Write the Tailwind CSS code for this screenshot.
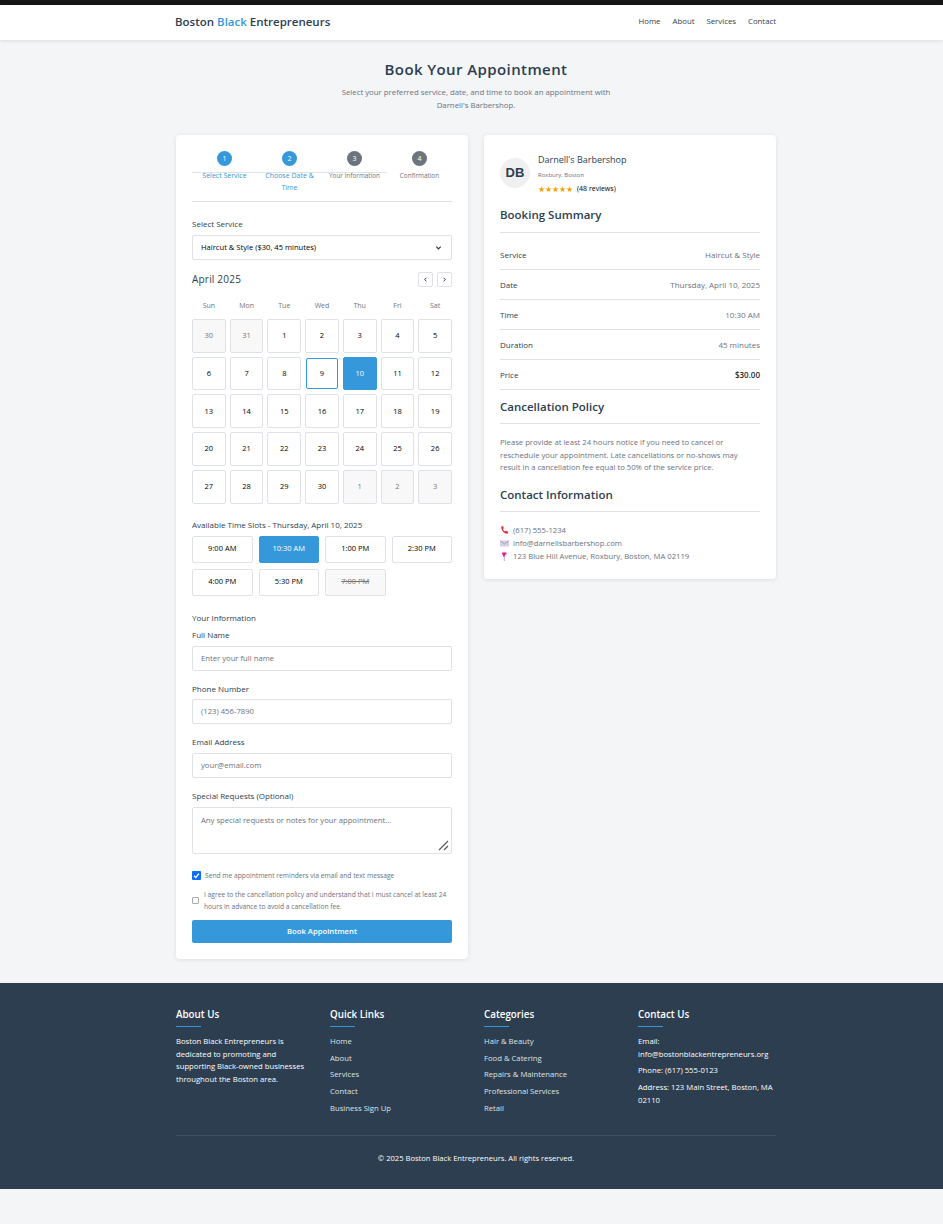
<!DOCTYPE html>
<html lang="en">
<head>
  <meta charset="UTF-8" />
  <title>Book Your Appointment</title>
  <script src="https://cdn.jsdelivr.net/npm/@tailwindcss/browser@4"></script>
</head>
<body class="bg-[#f4f5f7] text-[#2c3e50] font-['Open_Sans',sans-serif] text-[7.7px] min-h-[1224px]">
  <div class="h-[5px] bg-[#151515]"></div>

  <!-- Header -->
  <header class="h-[35px] bg-white shadow-[0_1px_4px_rgba(0,0,0,0.1)]">
    <div class="w-[600px] ml-[175px] pl-0 pb-[1px] h-full flex items-center justify-between">
      <div class="text-[11.5px] font-semibold">Boston <span class="text-[#3498db]">Black</span> Entrepreneurs</div>
      <nav class="flex gap-3 text-[7.8px] font-medium mr-[-1px]">
        <span>Home</span><span>About</span><span>Services</span><span>Contact</span>
      </nav>
    </div>
  </header>

  <main class="w-[600px] ml-[176px]">
    <div class="pt-[19px] text-center">
      <h1 class="text-[15px] leading-[20px] font-semibold tracking-[0.4px]">Book Your Appointment</h1>
      <p class="mt-[7px] text-[7.8px] leading-[13px] text-[#6b7280]">Select your preferred service, date, and time to book an appointment with<br>Darnell's Barbershop.</p>
    </div>

    <div class="mt-[23px] flex items-start gap-4">
      <!-- Booking form -->
      <section class="w-[292px] h-[824px] bg-white rounded-[4px] shadow-[0_1px_5px_rgba(0,0,0,0.09)] p-4">
        <div class="relative h-[51px] border-b border-[#dee2e6] grid grid-cols-4 text-center text-[7px] leading-[12px]">
          <div class="absolute left-0 top-[21px] w-[195px] h-px bg-[#dee2e6]"></div>
          <div class="text-[#3498db]">
            <div class="relative mx-auto w-[15px] h-[15px] rounded-full bg-[#3498db] text-white flex items-center justify-center">1</div>
            <div class="relative mt-[4px]">Select Service</div>
          </div>
          <div class="text-[#3498db]">
            <div class="relative mx-auto w-[15px] h-[15px] rounded-full bg-[#3498db] text-white flex items-center justify-center">2</div>
            <div class="relative mt-[4px] px-2">Choose Date &amp; Time</div>
          </div>
          <div class="text-[#6c757d]">
            <div class="relative mx-auto w-[15px] h-[15px] rounded-full bg-[#6c757d] text-white flex items-center justify-center">3</div>
            <div class="relative mt-[4px] text-[6.4px]">Your Information</div>
          </div>
          <div class="text-[#6c757d]">
            <div class="relative mx-auto w-[15px] h-[15px] rounded-full bg-[#6c757d] text-white flex items-center justify-center">4</div>
            <div class="relative mt-[4px] text-[6.4px]">Confirmation</div>
          </div>
        </div>

        <label class="block mt-[16px] text-[8px] leading-[11px] font-medium">Select Service</label>
        <div class="mt-[6px] h-[25px] border border-[#dee2e6] rounded-[2px] flex items-center justify-between pl-[8px] pr-[9px] text-[7.6px] text-black font-medium">
          <span>Haircut &amp; Style ($30, 45 minutes)</span>
          <svg class="w-[7px] h-[7px]" viewBox="0 0 8 8" fill="none" stroke="#333" stroke-width="1.4"><path d="M1.500 3 4 5.500 6.500 3"/></svg>
        </div>

        <!-- Calendar -->
        <div class="mt-[12px] h-[15px] flex items-center justify-between">
          <h3 class="text-[10px] tracking-[0.2px]">April 2025</h3>
          <div class="flex gap-[4px]">
            <button class="w-[15px] h-[15px] border border-[#dee2e6] rounded-[2px] bg-white flex items-center justify-center"><svg class="w-[5px] h-[5px]" viewBox="0 0 6 6" fill="none" stroke="#222" stroke-width="1.1"><path d="M4 1 2 3l2 2"/></svg></button>
            <button class="w-[15px] h-[15px] border border-[#dee2e6] rounded-[2px] bg-white flex items-center justify-center"><svg class="w-[5px] h-[5px]" viewBox="0 0 6 6" fill="none" stroke="#222" stroke-width="1.1"><path d="M2 1l2 2-2 2"/></svg></button>
          </div>
        </div>
        <div class="mt-[14px] grid grid-cols-7 gap-[4px] text-center text-[7px] leading-[10px] text-[#6c757d]">
          <span>Sun</span><span>Mon</span><span>Tue</span><span>Wed</span><span>Thu</span><span>Fri</span><span>Sat</span>
        </div>
        <div class="mt-[8px] grid grid-cols-7 gap-[4px] text-[7.5px] text-black">
          <div class="aspect-square flex items-center justify-center border border-[#dee2e6] rounded-[2px] bg-[#f8f8f8] text-[#777]">30</div>
          <div class="aspect-square flex items-center justify-center border border-[#dee2e6] rounded-[2px] bg-[#f8f8f8] text-[#777]">31</div>
          <div class="aspect-square flex items-center justify-center border border-[#dee2e6] rounded-[2px]">1</div>
          <div class="aspect-square flex items-center justify-center border border-[#dee2e6] rounded-[2px]">2</div>
          <div class="aspect-square flex items-center justify-center border border-[#dee2e6] rounded-[2px]">3</div>
          <div class="aspect-square flex items-center justify-center border border-[#dee2e6] rounded-[2px]">4</div>
          <div class="aspect-square flex items-center justify-center border border-[#dee2e6] rounded-[2px]">5</div>
          <div class="aspect-square flex items-center justify-center border border-[#dee2e6] rounded-[2px]">6</div>
          <div class="aspect-square flex items-center justify-center border border-[#dee2e6] rounded-[2px]">7</div>
          <div class="aspect-square flex items-center justify-center border border-[#dee2e6] rounded-[2px]">8</div>
          <div class="aspect-square m-px flex items-center justify-center border border-[#3498db] rounded-[2px]">9</div>
          <div class="aspect-square flex items-center justify-center border border-[#3498db] rounded-[2px] bg-[#3498db] text-white">10</div>
          <div class="aspect-square flex items-center justify-center border border-[#dee2e6] rounded-[2px]">11</div>
          <div class="aspect-square flex items-center justify-center border border-[#dee2e6] rounded-[2px]">12</div>
          <div class="aspect-square flex items-center justify-center border border-[#dee2e6] rounded-[2px]">13</div>
          <div class="aspect-square flex items-center justify-center border border-[#dee2e6] rounded-[2px]">14</div>
          <div class="aspect-square flex items-center justify-center border border-[#dee2e6] rounded-[2px]">15</div>
          <div class="aspect-square flex items-center justify-center border border-[#dee2e6] rounded-[2px]">16</div>
          <div class="aspect-square flex items-center justify-center border border-[#dee2e6] rounded-[2px]">17</div>
          <div class="aspect-square flex items-center justify-center border border-[#dee2e6] rounded-[2px]">18</div>
          <div class="aspect-square flex items-center justify-center border border-[#dee2e6] rounded-[2px]">19</div>
          <div class="aspect-square flex items-center justify-center border border-[#dee2e6] rounded-[2px]">20</div>
          <div class="aspect-square flex items-center justify-center border border-[#dee2e6] rounded-[2px]">21</div>
          <div class="aspect-square flex items-center justify-center border border-[#dee2e6] rounded-[2px]">22</div>
          <div class="aspect-square flex items-center justify-center border border-[#dee2e6] rounded-[2px]">23</div>
          <div class="aspect-square flex items-center justify-center border border-[#dee2e6] rounded-[2px]">24</div>
          <div class="aspect-square flex items-center justify-center border border-[#dee2e6] rounded-[2px]">25</div>
          <div class="aspect-square flex items-center justify-center border border-[#dee2e6] rounded-[2px]">26</div>
          <div class="aspect-square flex items-center justify-center border border-[#dee2e6] rounded-[2px]">27</div>
          <div class="aspect-square flex items-center justify-center border border-[#dee2e6] rounded-[2px]">28</div>
          <div class="aspect-square flex items-center justify-center border border-[#dee2e6] rounded-[2px]">29</div>
          <div class="aspect-square flex items-center justify-center border border-[#dee2e6] rounded-[2px]">30</div>
          <div class="aspect-square flex items-center justify-center border border-[#dee2e6] rounded-[2px] bg-[#f8f8f8] text-[#777]">1</div>
          <div class="aspect-square flex items-center justify-center border border-[#dee2e6] rounded-[2px] bg-[#f8f8f8] text-[#777]">2</div>
          <div class="aspect-square flex items-center justify-center border border-[#dee2e6] rounded-[2px] bg-[#f8f8f8] text-[#777]">3</div>
        </div>

        <!-- Time slots -->
        <div class="mt-[15px] text-[8px] leading-[11px] font-medium">Available Time Slots - Thursday, April 10, 2025</div>
        <div class="mt-[6px] grid grid-cols-4 gap-[6px] text-[7.5px] text-black">
          <div class="h-[27px] flex items-center justify-center border border-[#dee2e6] rounded-[2px]">9:00 AM</div>
          <div class="h-[27px] flex items-center justify-center border border-[#3498db] rounded-[2px] bg-[#3498db] text-white">10:30 AM</div>
          <div class="h-[27px] flex items-center justify-center border border-[#dee2e6] rounded-[2px]">1:00 PM</div>
          <div class="h-[27px] flex items-center justify-center border border-[#dee2e6] rounded-[2px]">2:30 PM</div>
          <div class="h-[27px] flex items-center justify-center border border-[#dee2e6] rounded-[2px]">4:00 PM</div>
          <div class="h-[27px] flex items-center justify-center border border-[#dee2e6] rounded-[2px]">5:30 PM</div>
          <div class="h-[27px] flex items-center justify-center border border-[#dee2e6] rounded-[2px] bg-[#f8f8f8] text-[#777] line-through">7:00 PM</div>
        </div>

        <!-- Customer details -->
        <div class="mt-[16px] text-[8px] leading-[11px] font-medium">Your Information</div>
        <label class="block mt-[6px] text-[8px] leading-[11px] font-medium">Full Name</label>
        <div class="mt-[6px] h-[25px] border border-[#dee2e6] rounded-[2px] flex items-center px-[8px] pt-[2px] text-[#6b7280]">Enter your full name</div>
        <label class="block mt-[12px] text-[8px] leading-[11px] font-medium">Phone Number</label>
        <div class="mt-[5px] h-[25px] border border-[#dee2e6] rounded-[2px] flex items-center px-[8px] pt-[2px] text-[#6b7280]">(123) 456-7890</div>
        <label class="block mt-[12px] text-[8px] leading-[11px] font-medium">Email Address</label>
        <div class="mt-[6px] h-[25px] border border-[#dee2e6] rounded-[2px] flex items-center px-[8px] pt-[2px] text-[#6b7280]">your@email.com</div>
        <label class="block mt-[12px] text-[8px] leading-[11px] font-medium">Special Requests (Optional)</label>
        <div class="relative mt-[6px] h-[47px] border border-[#dee2e6] rounded-[2px] px-[8px] py-[7px] leading-[11px] text-[#6b7280]">
          Any special requests or notes for your appointment...
          <svg class="absolute right-[2px] bottom-[2px] w-[11px] h-[11px]" viewBox="0 0 11 11" fill="none" stroke="#555" stroke-width="1.1"><path d="M1 10 10 1M6 10l4-4"/></svg>
        </div>

        <div class="mt-[17px] h-[10px] flex items-center gap-[4px] text-[6.7px] text-[#6b7280]">
          <span class="w-[9px] h-[9px] rounded-[1px] bg-[#0d6efd] flex items-center justify-center">
            <svg class="w-[7px] h-[7px]" viewBox="0 0 8 8" fill="none" stroke="#fff" stroke-width="1.6"><path d="M1.200 4.300 3.200 6.300 6.800 1.800"/></svg>
          </span>
          <span>Send me appointment reminders via email and text message</span>
        </div>
        <div class="mt-[8px] flex items-center gap-[4px] text-[6.7px] leading-[12px] text-[#6b7280]">
          <span class="shrink-0 w-[7px] h-[7px] border border-[#aaa] rounded-[1px] mr-[1px]"></span>
          <span>I agree to the cancellation policy and understand that I must cancel at least 24 hours in advance to avoid a cancellation fee.</span>
        </div>
        <button class="mt-[7px] w-full h-[23px] pt-[2px] rounded-[2px] bg-[#3498db] text-white text-[7.7px] font-semibold">Book Appointment</button>
      </section>

      <!-- Summary -->
      <aside class="w-[292px] h-[444px] bg-white rounded-[4px] shadow-[0_1px_5px_rgba(0,0,0,0.09)] px-4 pt-[18px]">
        <div class="flex">
          <div class="mt-[5px] w-[30px] h-[30px] rounded-full bg-[#f0f0f0] flex items-center justify-center font-['Liberation_Sans',sans-serif] text-[13px] font-bold">DB</div>
          <div class="ml-[8px]">
            <div class="text-[9px] leading-[13px]">Darnell's Barbershop</div>
            <div class="mt-[5px] text-[6px] leading-[9px] text-[#6b7280]">Roxbury, Boston</div>
            <div class="mt-[3px] flex items-center gap-[4px] leading-[12px] text-[7px] text-black">
              <span class="text-[#f5a100] text-[8px] tracking-[0px]">★★★★★</span>
              <span>(48 reviews)</span>
            </div>
          </div>
        </div>

        <h3 class="mt-[12px] text-[11.5px] leading-[16px] font-semibold">Booking Summary</h3>
        <div class="mt-[9px] border-t border-[#dee2e6]">
          <div class="h-[37px] pt-[8px] flex items-center justify-between border-b border-[#dee2e6] text-[8px] font-medium"><span>Service</span><span class="font-normal text-[#6b7280]">Haircut &amp; Style</span></div>
          <div class="h-[30px] flex items-center justify-between border-b border-[#dee2e6] text-[8px] font-medium"><span>Date</span><span class="font-normal text-[#6b7280]">Thursday, April 10, 2025</span></div>
          <div class="h-[30px] flex items-center justify-between border-b border-[#dee2e6] text-[8px] font-medium"><span>Time</span><span class="font-normal text-[#6b7280]">10:30 AM</span></div>
          <div class="h-[30px] flex items-center justify-between border-b border-[#dee2e6] text-[8px] font-medium"><span>Duration</span><span class="font-normal text-[#6b7280]">45 minutes</span></div>
          <div class="h-[30px] flex items-center justify-between border-b border-[#dee2e6] text-[8px] font-medium"><span>Price</span><span class="font-semibold text-[#1f2933]">$30.00</span></div>
        </div>

        <h3 class="mt-[9px] text-[11.5px] leading-[16px] font-semibold">Cancellation Policy</h3>
        <div class="mt-[8px] border-t border-[#dee2e6]"></div>
        <p class="mt-[12px] leading-[12.5px] text-[#6b7280]">Please provide at least 24 hours notice if you need to cancel or reschedule your appointment. Late cancellations or no-shows may result in a cancellation fee equal to 50% of the service price.</p>

        <h3 class="mt-[13px] text-[11.5px] leading-[16px] font-semibold">Contact Information</h3>
        <div class="mt-[8px] border-t border-[#dee2e6]"></div>
        <div class="mt-[12px] leading-[13px] text-[#6b7280]">
          <div class="flex items-center gap-[4px]">
            <svg class="w-[9px] h-[9px]" viewBox="0 0 9 9"><path d="M1.200.6 3 .3l.8 2-1 .8c.4 1.200 1.200 2 2.300 2.500l.9-.8 2 1-.4 2C4.800 8.200 1.200 5 1.200.6z" fill="#e0223a"/></svg>
            <span>(617) 555-1234</span>
          </div>
          <div class="flex items-center gap-[4px]">
            <svg class="w-[9px] h-[9px]" viewBox="0 0 9 9"><rect x="0" y="1.500" width="9" height="6" fill="#d8cfe0"/><path d="M.5 2 4.500 5 8.500 2" fill="none" stroke="#9a8fae" stroke-width=".8"/></svg>
            <span>info@darnellsbarbershop.com</span>
          </div>
          <div class="flex items-center gap-[4px]">
            <svg class="w-[9px] h-[9px]" viewBox="0 0 9 9"><path d="M4.300 4.500V9" stroke="#c9a9b5" stroke-width="1"/><path d="M2 .5h4.500v2H5v2H3v-2H2z" fill="#ec1c8a"/></svg>
            <span>123 Blue Hill Avenue, Roxbury, Boston, MA 02119</span>
          </div>
        </div>
      </aside>
    </div>
  </main>

  <!-- Footer -->
  <footer class="mt-[24px] h-[206px] bg-[#2c3e50] text-white">
    <div class="w-[600px] ml-[176px] pt-[24px]">
      <div class="h-[128px] grid grid-cols-4 gap-4">
        <div>
          <h4 class="pt-px text-[9.8px] leading-[13px] font-semibold">About Us</h4>
          <div class="mt-[5px] w-[25px] h-px bg-[#3498db]"></div>
          <p class="mt-[8px] leading-[12.7px]">Boston Black Entrepreneurs is dedicated to promoting and supporting Black-owned businesses throughout the Boston area.</p>
        </div>
        <div>
          <h4 class="pt-px text-[9.8px] leading-[13px] font-semibold">Quick Links</h4>
          <div class="mt-[5px] w-[25px] h-px bg-[#3498db]"></div>
          <ul class="mt-[8px] leading-[12.7px] space-y-[4px] text-[#dfe3e6]">
            <li>Home</li><li>About</li><li>Services</li><li>Contact</li><li>Business Sign Up</li>
          </ul>
        </div>
        <div>
          <h4 class="pt-px text-[9.8px] leading-[13px] font-semibold">Categories</h4>
          <div class="mt-[5px] w-[25px] h-px bg-[#3498db]"></div>
          <ul class="mt-[8px] leading-[12.7px] space-y-[4px] text-[#dfe3e6]">
            <li>Hair &amp; Beauty</li><li>Food &amp; Catering</li><li>Repairs &amp; Maintenance</li><li>Professional Services</li><li>Retail</li>
          </ul>
        </div>
        <div>
          <h4 class="pt-px text-[9.8px] leading-[13px] font-semibold">Contact Us</h4>
          <div class="mt-[5px] w-[25px] h-px bg-[#3498db]"></div>
          <div class="mt-[8px] leading-[12.7px] space-y-[4px]">
            <p>Email: info@bostonblackentrepreneurs.org</p>
            <p>Phone: (617) 555-0123</p>
            <p>Address: 123 Main Street, Boston, MA 02110</p>
          </div>
        </div>
      </div>
      <div class="border-t border-[#3f5163] pt-[16px] text-center text-[7.6px] leading-[12px]">© 2025 Boston Black Entrepreneurs. All rights reserved.</div>
    </div>
  </footer>
</body>
</html>
